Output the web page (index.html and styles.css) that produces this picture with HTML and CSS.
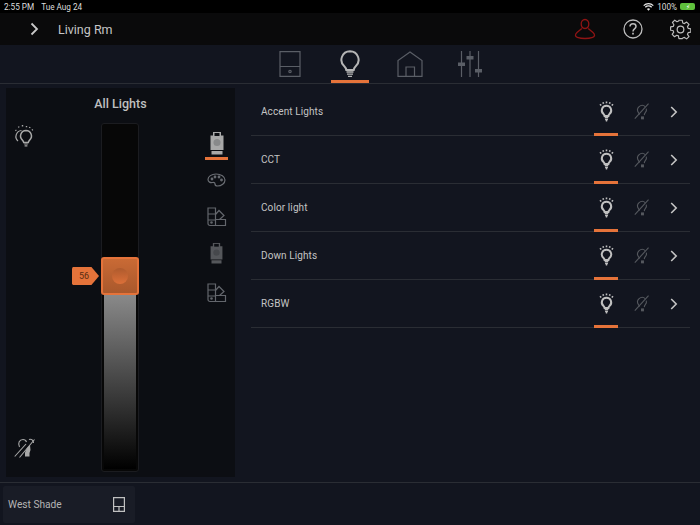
FILE: index.html
```html
<!DOCTYPE html>
<html lang="en">
<head>
    <meta charset="UTF-8">
    <title>Living Rm</title>
    <link rel="stylesheet" href="styles.css">
</head>
<body>

    <svg class="defs" width="0" height="0">
        <symbol id="bulb-rays" viewBox="0 0 24 30">
            <path d="M12 7.500a6.600 6.600 0 0 0-4.200 11.700c1 .9 1.400 1.700 1.500 2.800h5.400c.1-1.100.5-1.900 1.500-2.800A6.600 6.600 0 0 0 12 7.500z" fill="none" stroke="currentColor" stroke-width="2.800"/>
            <path d="M9.500 24.500h5M10 27h4M11 29h2" stroke="currentColor" stroke-width="1.800"/>
            <path d="M12 1.500v2.600M7 2.500l.8 2.400M17 2.500l-.8 2.400M2.800 5.500l1.800 1.800M21.200 5.500l-1.800 1.800" stroke="currentColor" stroke-width="2.200" fill="none"/>
        </symbol>
        <symbol id="bulb-off" viewBox="0 0 24 26">
            <path d="M17 5.500A7 7 0 0 0 6.800 15c.9 1 1.300 1.600 1.500 2.600M18.500 8.500c.8 2.300 0 4.700-1.500 6.300-1 1.100-1.400 2.200-1.500 3.700" fill="none" stroke="currentColor" stroke-width="1.700"/>
            <path d="M1 24 22 1" stroke="currentColor" stroke-width="1.700"/>
            <path d="M10.500 20.500h4.500v4.500h-4.500z" fill="currentColor"/>
        </symbol>
        <symbol id="shapes" viewBox="0 0 20 20">
            <path d="M1 1h7.500v17.500H3A2 2 0 0 1 1 16.500zM1 7h7.500M1 13h7.500M8.500 12.500h10v6H8.500M8.500 7.500 12 3.500l5 5-4.500 4" fill="none" stroke="currentColor" stroke-width="1.200"/>
            <circle cx="4.500" cy="15.500" r="1.300" fill="currentColor"/>
        </symbol>
        <symbol id="fixture" viewBox="0 0 14 23">
            <path d="M3 0h8v3.500h2.500V18H.5V3.500H3zM1.500 19h11v3.500h-11z" fill="currentColor"/>
            <rect x="4.500" y="1" width="5" height="3" fill="#0c0e13"/>
            <circle cx="7" cy="10.500" r="3.500" fill="#0c0e13" opacity=".2"/>
        </symbol>
    </svg>

    <div class="status-bar">
        <span class="status-left"><span>2:55 PM</span><span>Tue Aug 24</span></span>
        <span class="status-right">
            <svg width="11" height="8" viewBox="0 0 11 8" fill="none" stroke="#e8e8e8" stroke-width="1.300">
                <path d="M.7 2.600a7 7 0 0 1 9.600 0M2.300 4.300a4.600 4.600 0 0 1 6.400 0"/>
                <path d="M3.900 6a2.300 2.300 0 0 1 3.200 0L5.500 7.700z" fill="#e8e8e8" stroke="none"/>
            </svg>
            100%
            <span class="battery"><span class="bolt">&#9889;&#xFE0E;</span></span>
        </span>
    </div>

    <header class="top-bar">
        <div class="top-left">
            <svg class="back" width="9" height="14" viewBox="0 0 9 14"><path d="M1.500 1.500 7 7l-5.500 5.500" fill="none" stroke="#c9c9c9" stroke-width="1.800"/></svg>
            <span class="room">Living Rm</span>
        </div>
        <div class="top-icons">
            <svg width="22" height="22" viewBox="0 0 22 22" fill="none" stroke="#8f1414" stroke-width="1.300">
                <path d="M11 1.500c-2.500 0-3.800 2-3.800 4.300 0 2.300 1.200 4.700 3.800 4.700s3.800-2.400 3.800-4.700c0-2.300-1.300-4.300-3.800-4.300z"/>
                <path d="M7.800 10.500 3 14.500c-2.200 2-2 4 .3 4.800 2.300.8 4.900 1.200 7.700 1.200s5.400-.4 7.700-1.200c2.300-.8 2.500-2.800.3-4.800l-4.800-4"/>
            </svg>
            <svg width="20" height="20" viewBox="0 0 20 20" fill="none" stroke="#bdbdbd" stroke-width="1.300">
                <circle cx="10" cy="10" r="9"/>
                <path d="M7 7.600C7 5.800 8.300 4.800 10 4.800s3 1 3 2.700c0 2.400-3 2.400-3 4.900" stroke-width="1.500"/>
                <path d="M10 13.800v1.800" stroke-width="1.700"/>
            </svg>
            <svg width="21" height="21" viewBox="0 0 24 24" fill="none" stroke="#bdbdbd" stroke-width="1.400" stroke-linejoin="round">
                <circle cx="12" cy="12" r="3.800"/>
                <path d="M10 1h4l.6 3.200 2 .8 2.700-1.800 2.800 2.800-1.800 2.700.8 2 3.200.6v4l-3.200.6-.8 2 1.800 2.700-2.800 2.800-2.700-1.800-2 .8L14 23h-4l-.6-3.200-2-.8-2.700 1.800-2.800-2.800 1.800-2.700-.8-2L0 13v-4l3.200-.6.8-2L2.200 3.700 5 .9l2.700 1.800 2-.8z" transform="translate(.7 .5) scale(.95)"/>
            </svg>
        </div>
    </header>

    <nav class="tabs">
        <div class="tab">
            <svg class="tab-icon-low" width="22" height="26" viewBox="0 0 22 26" fill="none" stroke="#5a5e66" stroke-width="1.200">
                <path d="M1 .7h20v24.600H1zM1 15.500h20"/>
                <circle cx="11" cy="20.500" r="1.200"/>
            </svg>
        </div>
        <div class="tab tab-active">
            <svg width="20" height="28" viewBox="0 0 20 28" fill="none" stroke="#b5b5b5" stroke-width="2">
                <path d="M10 1.200a8.600 8.600 0 0 0-5.700 15c1.300 1.200 1.800 2.400 2 3.800h7.400c.2-1.400.7-2.600 2-3.800A8.600 8.600 0 0 0 10 1.200z"/>
                <path d="M6.500 22h7M7 24.200h6M8 26.400h4" stroke-width="1.300"/>
            </svg>
        </div>
        <div class="tab">
            <svg class="tab-icon-low" width="26" height="26" viewBox="0 0 26 26" fill="none" stroke="#5a5e66" stroke-width="1.200">
                <path d="M1 25.300V9.500L13 1l12 8.500v15.800zM9 25V16h8.500v9"/>
            </svg>
        </div>
        <div class="tab">
            <svg class="tab-icon-low" width="27" height="26" viewBox="0 0 27 26" fill="none" stroke="#5a5e66" stroke-width="1.200">
                <path d="M4.500 0v26M13 0v26M21.500 0v26"/>
                <path d="M1 11.500h7V15H1zM9.500 5h7v3.500h-7zM18 18h7v3.500h-7z" fill="#5a5e66" stroke="none"/>
            </svg>
        </div>
    </nav>

    <main class="content">
        <section class="panel">
            <h2 class="panel-title">All Lights</h2>
            <div class="panel-body">
                <div class="side-col">
                    <svg width="20" height="23" viewBox="0 0 20 23" fill="none" stroke="#a8a8a8" stroke-width="1">
                        <path d="M7.500 6.500a6 6 0 0 0-3.500 10.500" stroke-width="1.200"/>
                        <path d="M12 6.500a5.500 5.500 0 0 0-3.600 9.600c.9.900 1.200 1.500 1.300 2.400h4.600c.1-.9.400-1.500 1.300-2.400A5.500 5.500 0 0 0 12 6.500z" stroke-width="1.500"/>
                        <path d="M10.200 20h3.600M10.600 21.800h2.800" stroke-width="1.200"/>
                        <path d="M1.500 6l.8.8M4.500 2.500l.4 1M8.500 1v1.400M12.500 2v1.200M16 3l-.5 1M18.800 5.500l-.8.8" stroke-width="1.400"/>
                    </svg>
                    <svg width="22" height="21" viewBox="0 0 22 21" fill="none" stroke="#a8a8a8" stroke-width="1.100">
                        <path d="M9 2.500C5.500 2.500 3.500 6 5.500 10M9 2.500c2 0 3 1 3.500 2.500M15 2.500c2.500-1 4.500 1 4.500 3.500"/>
                        <path d="M.7 19.500 12 7M5.500 20.500 20.500 2.500"/>
                        <path d="M13 11l3-3 .5 5-1 3v3.500h-4.500V15.500z" fill="#a8a8a8" stroke="none"/>
                    </svg>
                </div>
                <div class="slider">
                    <div class="slider-fill" style="height: 51%"></div>
                    <div class="thumb"><span class="thumb-dot"></span></div>
                    <div class="level">56</div>
                </div>
                <div class="mode-col">
                    <div class="mode mode-active"><svg class="mode-fixture" width="14" height="23"><use href="#fixture"/></svg></div>
                    <div class="mode mode-palette">
                        <svg width="19" height="14" viewBox="0 0 19 14" fill="none" stroke="#6b6e74" stroke-width="1.200">
                            <path d="M9 1C4.500 1 1 3.500 1 6.500 1 9 3.500 10 5.500 9.500c2-.4 2.500.5 2.500 1.500 0 1.300 1 2 2.500 2 4 0 7.500-2.800 7.500-6C18 3.500 14 1 9 1z"/>
                            <circle cx="5" cy="6" r=".8"/><circle cx="8" cy="4" r=".8"/><circle cx="12" cy="4" r=".8"/><circle cx="14.500" cy="7" r=".8"/>
                        </svg>
                    </div>
                    <div class="mode"><svg class="mode-shapes" width="20" height="20"><use href="#shapes"/></svg></div>
                    <div class="mode mode-dim"><svg class="mode-fixture dim" width="13" height="21"><use href="#fixture"/></svg></div>
                    <div class="mode"><svg class="mode-shapes" width="20" height="20"><use href="#shapes"/></svg></div>
                </div>
            </div>
        </section>

        <section class="list">
            <div class="row">
                <span class="row-name">Accent Lights</span>
                <div class="row-on"><svg width="17" height="22"><use href="#bulb-rays"/></svg></div>
                <div class="row-off"><svg width="16" height="17"><use href="#bulb-off"/></svg></div>
                <svg class="row-arrow" width="8" height="12" viewBox="0 0 8 12"><path d="M1.200 1 6.200 6l-5 5" fill="none" stroke="#c4c4c4" stroke-width="1.600"/></svg>
            </div>
            <div class="row">
                <span class="row-name">CCT</span>
                <div class="row-on"><svg width="17" height="22"><use href="#bulb-rays"/></svg></div>
                <div class="row-off"><svg width="16" height="17"><use href="#bulb-off"/></svg></div>
                <svg class="row-arrow" width="8" height="12" viewBox="0 0 8 12"><path d="M1.200 1 6.200 6l-5 5" fill="none" stroke="#c4c4c4" stroke-width="1.600"/></svg>
            </div>
            <div class="row">
                <span class="row-name">Color light</span>
                <div class="row-on"><svg width="17" height="22"><use href="#bulb-rays"/></svg></div>
                <div class="row-off"><svg width="16" height="17"><use href="#bulb-off"/></svg></div>
                <svg class="row-arrow" width="8" height="12" viewBox="0 0 8 12"><path d="M1.200 1 6.200 6l-5 5" fill="none" stroke="#c4c4c4" stroke-width="1.600"/></svg>
            </div>
            <div class="row">
                <span class="row-name">Down Lights</span>
                <div class="row-on"><svg width="17" height="22"><use href="#bulb-rays"/></svg></div>
                <div class="row-off"><svg width="16" height="17"><use href="#bulb-off"/></svg></div>
                <svg class="row-arrow" width="8" height="12" viewBox="0 0 8 12"><path d="M1.200 1 6.200 6l-5 5" fill="none" stroke="#c4c4c4" stroke-width="1.600"/></svg>
            </div>
            <div class="row">
                <span class="row-name">RGBW</span>
                <div class="row-on"><svg width="17" height="22"><use href="#bulb-rays"/></svg></div>
                <div class="row-off"><svg width="16" height="17"><use href="#bulb-off"/></svg></div>
                <svg class="row-arrow" width="8" height="12" viewBox="0 0 8 12"><path d="M1.200 1 6.200 6l-5 5" fill="none" stroke="#c4c4c4" stroke-width="1.600"/></svg>
            </div>
        </section>
    </main>

    <footer class="footer">
        <div class="shade-card">
            <span>West Shade</span>
            <svg width="12" height="15" viewBox="0 0 12 15" fill="none" stroke="#c0c0c0" stroke-width="1.200">
                <path d="M.6.600h10.800v13.800H.6zM.6 9.500h10.800M6 9.500v4.900"/>
            </svg>
        </div>
    </footer>

</body>
</html>
```

FILE: styles.css
```css
* {
    box-sizing: border-box;
}

body {
    margin: 0;
    width: 700px;
    height: 525px;
    overflow: hidden;
    display: flex;
    flex-direction: column;
    background-color: #12151f;
    font-family: Roboto, "Liberation Sans", sans-serif;
    color: #c4c4c4;
}

.defs {
    position: absolute;
}

/* Barra de estado */
.status-bar {
    height: 13px;
    flex: none;
    display: flex;
    justify-content: space-between;
    align-items: center;
    padding: 0 5px 0 4px;
    background-color: #000;
    color: #dcdcdc;
    font-size: 8.2px;
}

.status-left {
    display: flex;
    gap: 7px;
}

.status-right {
    display: flex;
    align-items: center;
    gap: 3px;
}

.battery {
    width: 15px;
    height: 7px;
    display: flex;
    align-items: center;
    justify-content: center;
    background-color: #5fc13c;
    border-radius: 2px;
}

.bolt {
    font-size: 6px;
    line-height: 1;
    color: #fff;
}

/* Cabecera */
.top-bar {
    height: 32px;
    flex: none;
    display: flex;
    justify-content: space-between;
    align-items: center;
    padding: 0 9px 0 30px;
    background-color: #0a0a0b;
}

.top-left {
    display: flex;
    align-items: center;
    gap: 19px;
}

.room {
    font-size: 12.5px;
    color: #c6c6c6;
}

.top-icons {
    display: flex;
    align-items: center;
    gap: 27px;
}

/* Pestañas */
.tabs {
    height: 39px;
    flex: none;
    display: flex;
    justify-content: center;
    gap: 22px;
    padding-left: 60px;
    border-bottom: 1px solid #2a2d34;
}

.tab {
    width: 38px;
    height: 38px;
    display: flex;
    justify-content: center;
    padding-top: 5px;
}

.tab-icon-low {
    margin-top: 1px;
}

.tab-active {
    border-bottom: 3px solid #e5733a;
}

/* Contenido */
.content {
    flex: 1;
    display: flex;
    gap: 16px;
    padding: 4px 10px 5px 6px;
    min-height: 0;
}

.panel {
    width: 229px;
    display: flex;
    flex-direction: column;
    background-color: #0c0e13;
}

.panel-title {
    margin: 0;
    padding-top: 8px;
    text-align: center;
    font-size: 12.5px;
    line-height: 15px;
    font-weight: 500;
    color: #c0c0c0;
}

.panel-body {
    flex: 1;
    display: flex;
    padding: 12px 7px 5px 8px;
}

.side-col {
    width: 87px;
    display: flex;
    flex-direction: column;
    justify-content: space-between;
    padding: 1px 0 14px 0;
}

.slider {
    position: relative;
    width: 38px;
    display: flex;
    flex-direction: column;
    justify-content: flex-end;
    padding: 1px 2px 2px;
    background-color: #070707;
    border: 1px solid #1b1c20;
    border-radius: 3px;
}

.slider-fill {
    background: linear-gradient(#8a8a8a, #000);
}

.thumb {
    position: absolute;
    left: -1px;
    top: 133px;
    width: 38px;
    height: 38px;
    display: flex;
    align-items: center;
    justify-content: center;
    background: linear-gradient(#c96a35, #a9582c);
    border: 2px solid #e5733a;
    border-radius: 3px;
}

.thumb-dot {
    width: 16px;
    height: 16px;
    border-radius: 50%;
    background: linear-gradient(#ae5a2d, #dc7039);
}

.level {
    position: absolute;
    left: -30px;
    top: 143px;
    width: 27px;
    height: 18px;
    padding-right: 3px;
    text-align: center;
    font-size: 9px;
    line-height: 18px;
    color: #5a2c12;
    background-color: #e5733a;
    clip-path: polygon(0 8%, 3% 0, 72% 0, 100% 50%, 72% 100%, 3% 100%, 0 92%);
}

.mode-col {
    flex: 1;
    display: flex;
    flex-direction: column;
    align-items: flex-end;
    padding-top: 3px;
    gap: 1px;
}

.mode {
    width: 23px;
    height: 37px;
    display: flex;
    justify-content: center;
    padding-top: 5px;
}

.mode-active {
    height: 34px;
    margin-bottom: 3px;
    padding-top: 6px;
    border-bottom: 3px solid #e5733a;
}

.mode-palette {
    padding-top: 9px;
}

.mode-dim {
    padding-top: 3px;
}

.mode-fixture {
    color: #a8a8a8;
}

.mode-fixture.dim {
    color: #55575b;
}

.mode-shapes {
    color: #63666c;
}

/* Lista */
.list {
    flex: 1;
    display: flex;
    flex-direction: column;
}

.row {
    height: 48px;
    flex: none;
    display: flex;
    align-items: center;
    padding-left: 10px;
    border-bottom: 1px solid #2a2d34;
}

.row-name {
    flex: 1;
    font-size: 10px;
    letter-spacing: 0.1px;
    color: #c4c4c4;
}

.row-on {
    width: 24px;
    height: 48px;
    display: flex;
    align-items: center;
    justify-content: center;
    color: #c0c0c0;
    border-bottom: 3px solid #e5733a;
    margin-bottom: -1px;
}

.row-off {
    width: 16px;
    margin-left: 16px;
    display: flex;
    color: #55585e;
}

.row-arrow {
    margin: 0 12px 0 20px;
}

/* Pie */
.footer {
    height: 43px;
    flex: none;
    padding: 3px;
    border-top: 1px solid #2a2d34;
}

.shade-card {
    width: 132px;
    height: 37px;
    display: flex;
    justify-content: space-between;
    align-items: center;
    padding: 0 10px 1px 5px;
    background-color: #191c26;
    border-radius: 2px;
    font-size: 10.2px;
    color: #b4b4b4;
}
```
